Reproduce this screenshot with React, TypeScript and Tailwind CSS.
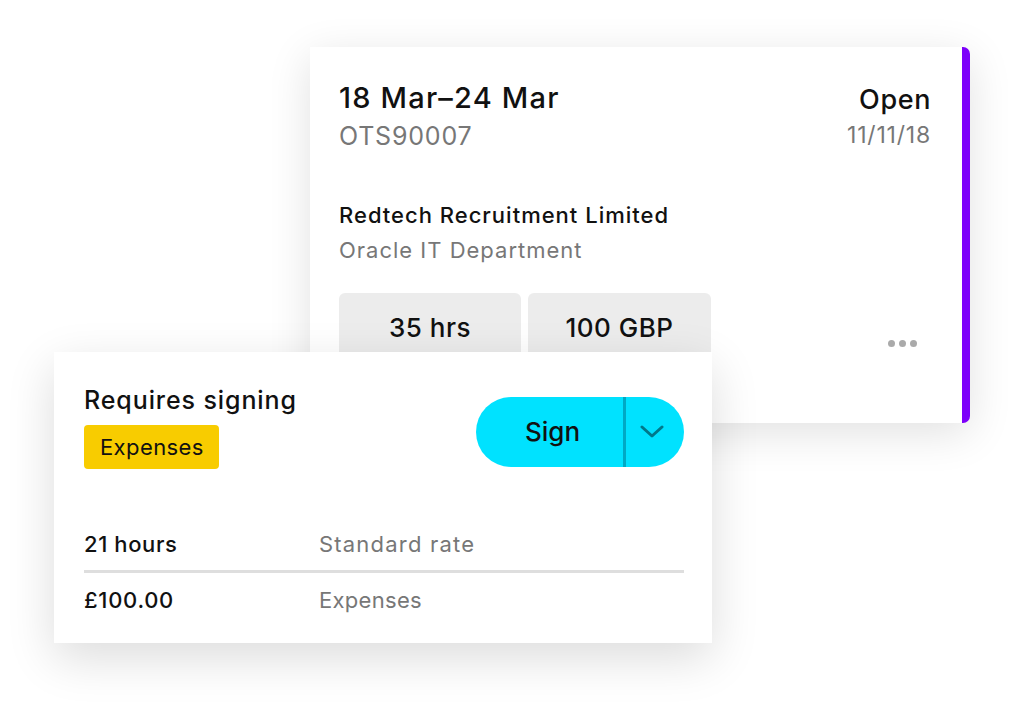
import React from "react";

export default function App() {
  return (
    <div
      className="w-[1024px] h-[707px] bg-white overflow-hidden text-[#111]"
      style={{ fontFamily: "Inter, 'Noto Sans', sans-serif" }}
    >
      <div className="pt-[47px] pl-[310px]">
        <div className="w-[660px] h-[376px] bg-white rounded-r-[7px] border-r-[8px] border-[#7d00fa] shadow-[0_10px_44px_rgba(0,0,0,0.12)] pl-[29px] pr-[31px] pt-[36px]">
          <div className="flex justify-between">
            <div>
              <div className="text-[29px] leading-none font-medium tracking-[1.2px]">18 Mar–24 Mar</div>
              <div className="mt-[12px] text-[25px] leading-none text-[#777] tracking-[0.8px]">OTS90007</div>
            </div>
            <div className="flex flex-col items-end pt-[3px]">
              <div className="text-[27px] leading-none font-medium tracking-[0.6px]">Open</div>
              <div className="mt-[11px] text-[23px] leading-none text-[#777] tracking-[0.8px]">11/11/18</div>
            </div>
          </div>
          <div className="mt-[55px] text-[22px] leading-none font-medium tracking-[1px]">Redtech Recruitment Limited</div>
          <div className="mt-[13px] text-[22px] leading-none text-[#777] tracking-[1px]">Oracle IT Department</div>
          <div className="mt-[32px] flex items-start">
            <div className="w-[182px] h-[80px] rounded-[6px] bg-[#ececec] pt-[22px] text-center text-[26px] leading-none font-medium tracking-[0.5px]">
              35 hrs
            </div>
            <div className="ml-[7px] w-[183px] h-[80px] rounded-[6px] bg-[#ececec] pt-[22px] text-center text-[26px] leading-none font-medium tracking-[0.5px]">
              100 GBP
            </div>
            <div className="ml-auto mr-[14px] mt-[47px] flex gap-[4px]">
              <span className="block w-[7px] h-[7px] rounded-full bg-[#aaa]" />
              <span className="block w-[7px] h-[7px] rounded-full bg-[#aaa]" />
              <span className="block w-[7px] h-[7px] rounded-full bg-[#aaa]" />
            </div>
          </div>
        </div>
      </div>

      <div className="relative z-10 ml-[54px] mt-[-71px] w-[658px] h-[291px] bg-white shadow-[0_15px_45px_rgba(0,0,0,0.14)] pl-[30px] pr-[28px] pt-[36px]">
        <div className="flex justify-between items-start">
          <div>
            <div className="text-[25px] leading-none font-medium tracking-[0.9px]">Requires signing</div>
            <div className="mt-[12px] w-[135px] h-[44px] rounded-[4px] bg-[#f8cc00] flex items-center pl-[16px] text-[22px] leading-none tracking-[0.4px]">
              Expenses
            </div>
          </div>
          <div className="mt-[9px] w-[208px] h-[70px] rounded-full bg-[#00e2ff] flex items-stretch overflow-hidden">
            <div className="w-[147px] flex items-center justify-center text-[26px] leading-none font-medium pl-[6px]">
              Sign
            </div>
            <div className="w-[3px] bg-[#00a9c4]" />
            <div className="flex-1 flex items-center justify-center pr-[6px]">
              <svg width="24" height="14" viewBox="0 0 24 14" fill="none">
                <path d="M2 2L12 11L22 2" stroke="#00788a" strokeWidth="3" strokeLinecap="round" strokeLinejoin="round" />
              </svg>
            </div>
          </div>
        </div>
        <div className="mt-[64px] flex text-[22px] leading-none">
          <div className="w-[235px] font-medium tracking-[0.6px]">21 hours</div>
          <div className="text-[#777] tracking-[1.2px]">Standard rate</div>
        </div>
        <div className="mt-[15px] h-[3px] bg-[#dedede]" />
        <div className="mt-[16px] flex text-[22px] leading-none">
          <div className="w-[235px] font-medium tracking-[0.7px]">£100.00</div>
          <div className="text-[#777] tracking-[0.3px]">Expenses</div>
        </div>
      </div>
    </div>
  );
}
